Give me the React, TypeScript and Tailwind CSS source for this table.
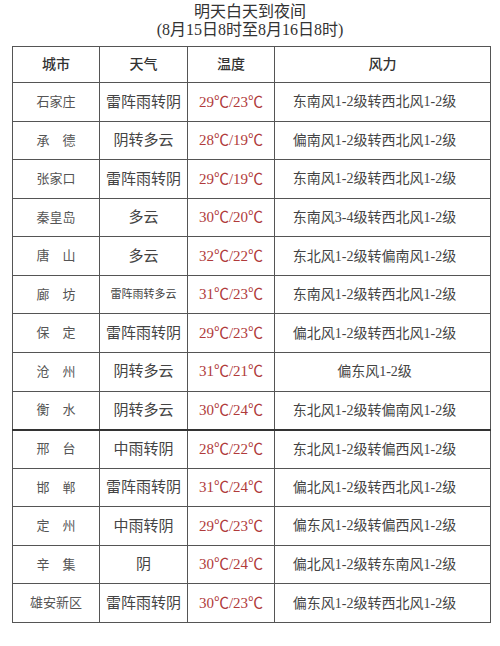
import React from "react";

type Row = { city: string; weather: string; small?: boolean; temp: string; wind: string; thick?: boolean };

const rows: Row[] = [
  { city: "石家庄", weather: "雷阵雨转阴", temp: "29℃/23℃", wind: "东南风1-2级转西北风1-2级" },
  { city: "承　德", weather: "阴转多云", temp: "28℃/19℃", wind: "偏南风1-2级转西北风1-2级" },
  { city: "张家口", weather: "雷阵雨转阴", temp: "29℃/19℃", wind: "东南风1-2级转西北风1-2级" },
  { city: "秦皇岛", weather: "多云", temp: "30℃/20℃", wind: "东南风3-4级转西北风1-2级" },
  { city: "唐　山", weather: "多云", temp: "32℃/22℃", wind: "东北风1-2级转偏南风1-2级" },
  { city: "廊　坊", weather: "雷阵雨转多云", small: true, temp: "31℃/23℃", wind: "东南风1-2级转西北风1-2级" },
  { city: "保　定", weather: "雷阵雨转阴", temp: "29℃/23℃", wind: "偏北风1-2级转西北风1-2级" },
  { city: "沧　州", weather: "阴转多云", temp: "31℃/21℃", wind: "偏东风1-2级" },
  { city: "衡　水", weather: "阴转多云", temp: "30℃/24℃", wind: "东北风1-2级转偏南风1-2级" },
  { city: "邢　台", weather: "中雨转阴", temp: "28℃/22℃", wind: "东北风1-2级转偏西风1-2级", thick: true },
  { city: "邯　郸", weather: "雷阵雨转阴", temp: "31℃/24℃", wind: "偏北风1-2级转西北风1-2级" },
  { city: "定　州", weather: "中雨转阴", temp: "29℃/23℃", wind: "偏东风1-2级转偏西风1-2级" },
  { city: "辛　集", weather: "阴", temp: "30℃/24℃", wind: "偏北风1-2级转东南风1-2级" },
  { city: "雄安新区", weather: "雷阵雨转阴", temp: "30℃/23℃", wind: "偏东风1-2级转西北风1-2级" },
];

export default function App() {
  return (
    <div
      className="w-[500px] h-[646px] bg-white text-[#3a3a3a] overflow-hidden"
      style={{ fontFamily: '"Liberation Serif", "Noto Sans CJK SC", serif' }}
    >
      <div className="pt-[3px] text-center text-[16px] leading-[18px] text-[#333]">
        <div>明天白天到夜间</div>
        <div>(8月15日8时至8月16日8时)</div>
      </div>
      <table className="ml-[12px] mt-[7px] w-[478px] border-collapse table-fixed">
        <colgroup>
          <col className="w-[87px]" />
          <col className="w-[88px]" />
          <col className="w-[87px]" />
          <col className="w-[216px]" />
        </colgroup>
        <thead>
          <tr className="h-[36px]">
            {["城市", "天气", "温度", "风力"].map((h) => (
              <th key={h} className="border border-[#555] text-center text-[14px] font-medium text-[#333] p-0">
                {h}
              </th>
            ))}
          </tr>
        </thead>
        <tbody>
          {rows.map((r) => (
            <tr key={r.city} className="h-[38.57px]">
              <td className={`border border-[#555] ${r.thick ? "border-t-2 border-t-[#333]" : ""} text-center text-[13px] text-[#555] p-0`}>
                {r.city}
              </td>
              <td className={`border border-[#555] ${r.thick ? "border-t-2 border-t-[#333]" : ""} text-center p-0 ${r.small ? "text-[11px]" : "text-[15px]"} text-[#444]`}>
                {r.weather}
              </td>
              <td className={`border border-[#555] ${r.thick ? "border-t-2 border-t-[#333]" : ""} text-center text-[15px] text-[#b03a3a] p-0`}>
                {r.temp}
              </td>
              <td className={`border border-[#555] ${r.thick ? "border-t-2 border-t-[#333]" : ""} text-center text-[14px] text-[#444] p-0 pr-[16px]`}>
                {r.wind}
              </td>
            </tr>
          ))}
        </tbody>
      </table>
    </div>
  );
}
